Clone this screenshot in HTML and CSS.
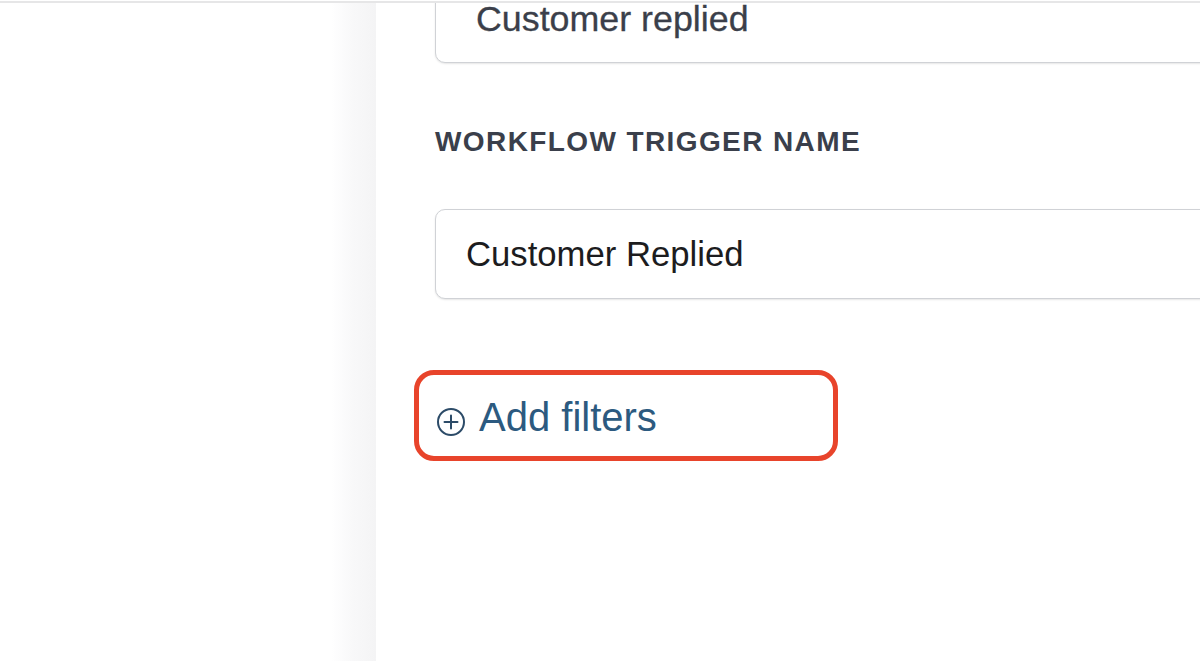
FILE: index.html
```html
<!DOCTYPE html>
<html lang="en">
<head>
<meta charset="utf-8">
<title>Workflow trigger</title>
<link rel="stylesheet" href="styles.css">
</head>
<body>
<div class="top-line"></div>
<div class="layout">
  <aside class="sidebar"></aside>
  <main class="content">
    <div class="field field-select">Customer replied</div>
    <div class="label">WORKFLOW TRIGGER NAME</div>
    <div class="field field-input">Customer Replied</div>
    <div class="add-filters">
      <svg class="plus-icon" width="30" height="30" viewBox="0 0 30 30" aria-hidden="true">
        <circle cx="15" cy="15" r="13" fill="none" stroke="currentColor" stroke-width="2"/>
        <path d="M15 8.5v13M8.5 15h13" fill="none" stroke="currentColor" stroke-width="2" stroke-linecap="round"/>
      </svg><span class="add-text">Add filters</span>
      <div class="highlight"></div>
    </div>
  </main>
</div>
</body>
</html>
```
FILE: styles.css
```css
* { box-sizing: border-box; }
html, body {
  margin: 0;
  padding: 0;
  background: #ffffff;
  font-family: "Liberation Sans", Arial, sans-serif;
  width: 1200px;
  height: 661px;
  overflow: hidden;
}
.top-line {
  margin-top: 1px;
  height: 2px;
  background: #e6e6e7;
}
.layout {
  display: flex;
  height: 658px;
  overflow: hidden;
}
.sidebar {
  flex: 0 0 376px;
  background: linear-gradient(90deg, #ffffff 0%, #ffffff 88%, #f8f8f9 94%, #f4f4f5 100%);
}
.content {
  flex: 1 1 auto;
  padding-left: 59px;
  min-width: 0;
}
.field {
  width: 900px;
  height: 90px;
  border: 1.5px solid #d0d2d6;
  border-radius: 10px;
  box-shadow: 0 1px 2px rgba(0, 0, 0, 0.1);
  display: flex;
  align-items: center;
  font-size: 34.7px;
  background: #fff;
}
.field-select {
  margin-top: -30px;
  padding-left: 40px;
  padding-top: 2px;
  color: #3b3f4a;
  font-size: 35.8px;
  -webkit-text-stroke: 0.3px #3b3f4a;
}
.label {
  margin-top: 65px;
  font-size: 28px;
  line-height: 28px;
  font-weight: bold;
  letter-spacing: 1.4px;
  color: #3a3f4b;
}
.field-input {
  margin-top: 53px;
  padding-left: 30px;
  color: #1c1c1e;
}
.add-filters {
  position: relative;
  margin-top: 94px;
  width: 400px;
  font-size: 40px;
  line-height: 48px;
  color: #2c5a80;
  white-space: nowrap;
}
.plus-icon {
  color: #2c4b68;
  vertical-align: -6px;
  margin-left: 1px;
  margin-right: 13px;
}
.highlight {
  position: absolute;
  left: -21px;
  top: -23px;
  width: 424px;
  height: 91px;
  border: 5px solid #e8442b;
  border-radius: 20px;
  pointer-events: none;
}
```
